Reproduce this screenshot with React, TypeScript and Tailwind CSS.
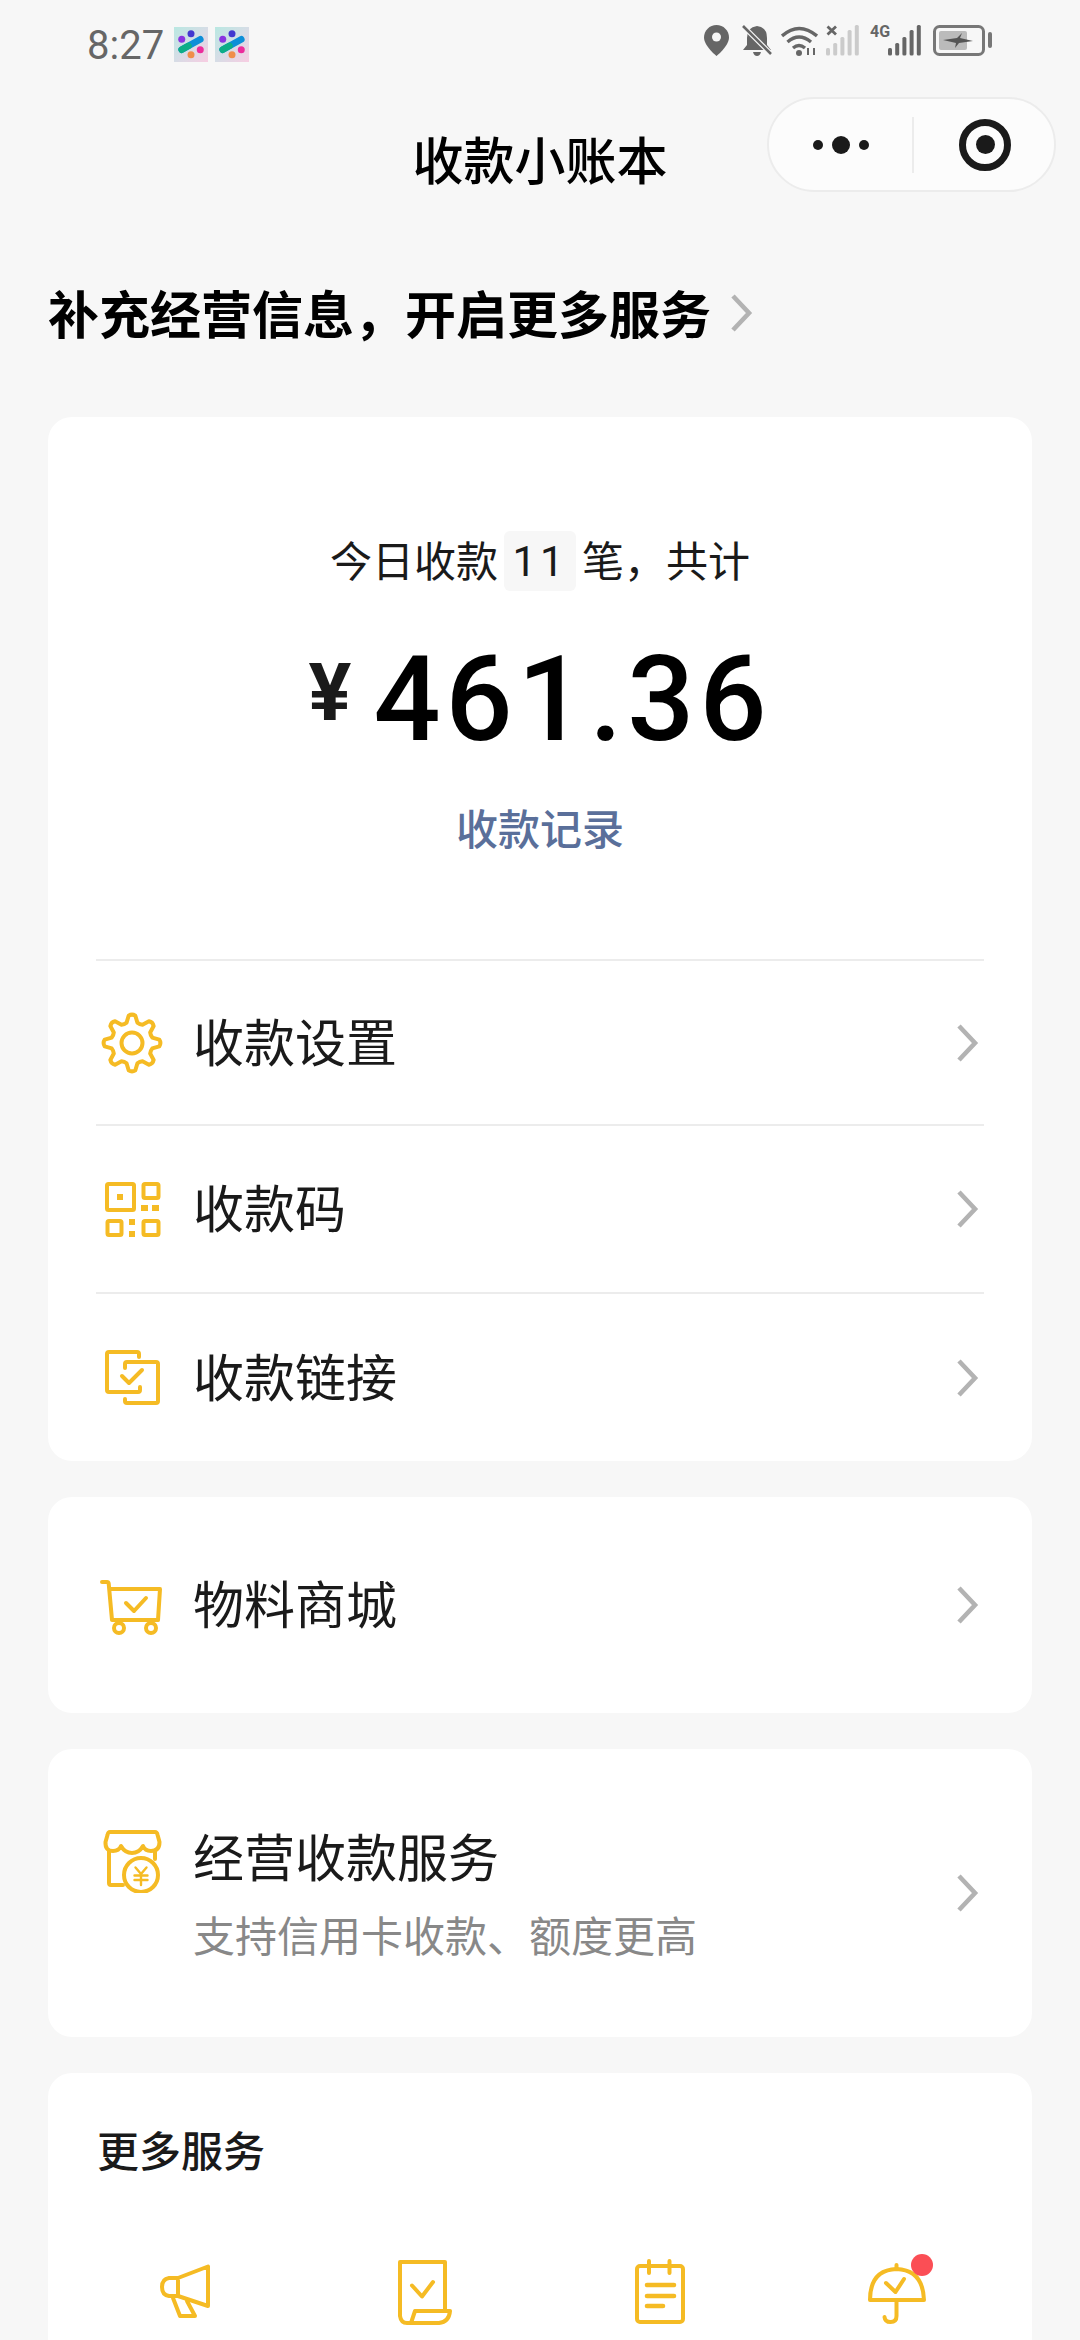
import React from "react";

const YELLOW = "#f5bb24";

// 8 tooth gear outline, centred on 32,32
const gearPath = () => {
  const pt = (r: number, deg: number) => {
    const a = (deg * Math.PI) / 180;
    return `${(32 + r * Math.cos(a)).toFixed(2)} ${(32 + r * Math.sin(a)).toFixed(2)}`;
  };
  let d = "";
  for (let i = 0; i < 8; i++) {
    const a = i * 45 - 90;
    d += `${i === 0 ? "M" : "L"}${pt(21, a - 15)} L${pt(27.5, a - 7)} Q${pt(29.5, a)} ${pt(27.5, a + 7)} L${pt(21, a + 15)} Q${pt(20, a + 22.5)} ${pt(21, a + 30)} `;
  }
  return d + "Z";
};

const Icon = ({ children, h = 64 }: { children: React.ReactNode; h?: number }) => (
  <svg
    width="64"
    height={h}
    viewBox={`0 0 64 ${h}`}
    fill="none"
    stroke={YELLOW}
    strokeWidth="4"
    strokeLinecap="round"
    strokeLinejoin="round"
  >
    {children}
  </svg>
);

const GearIcon = () => (
  <Icon>
    <path d={gearPath()} />
    <circle cx="32" cy="32" r="10.5" />
  </Icon>
);

const QrIcon = () => (
  <Icon>
    <rect x="7" y="7" width="27" height="26" rx="1.5" />
    <rect x="43.5" y="7" width="15" height="14" rx="1.5" />
    <rect x="7.5" y="44" width="14" height="14" rx="1.5" />
    <rect x="43.5" y="44" width="15" height="14" rx="1.5" />
    <g fill={YELLOW} stroke="none">
      <rect x="17" y="17" width="6" height="6" />
      <rect x="41" y="28" width="7" height="6" />
      <rect x="52" y="28" width="7" height="6" />
      <rect x="29" y="42" width="6" height="6" />
      <rect x="29" y="54" width="6" height="6" />
    </g>
  </Icon>
);

const LinkIcon = () => (
  <Icon>
    <path d="M39 11V8Q39 6 37 6H9Q7 6 7 8V44Q7 46 9 46H38Q40 46 40 44V41" />
    <path d="M25 22V18Q25 16 27 16H56Q58 16 58 18V55Q58 57 56 57H27Q25 57 25 55V53" />
    <path d="M22 30L29 37L42 24" />
  </Icon>
);

const CartIcon = () => (
  <Icon>
    <path d="M2 9H7Q8.4 9 8.7 10.5L12 47H58L60 16H9.5" />
    <circle cx="19" cy="55" r="5" />
    <circle cx="51" cy="55" r="5" />
    <path d="M26 30L34 38L46 25" />
  </Icon>
);

const StoreIcon = () => (
  <Icon>
    <path d="M10 3H55Q57 3 57.6 6L59.5 13Q59.5 22 51 22Q45 22 43 17Q39 24 32 24Q25 24 21 17Q19 22 13 22Q5 22 5.5 13L7.5 6Q8 3 10 3Z" />
    <path d="M9 22V54Q9 56 11 56H23" />
    <path d="M55 22V30" />
    <circle cx="41" cy="46" r="17" />
    <path d="M35.5 38.5L41 45L46.5 38.5M34.5 46.5H47.5M34.5 51H47.5M41 45V56" strokeWidth="2.4" />
  </Icon>
);

const HornIcon = () => (
  <Icon>
    <path d="M24 19L54 7.5V47L24 37V19H15Q8 20 8 28Q8 36 15 37H24" />
    <path d="M19 39L26 57H41L33 42" />
  </Icon>
);

const ReceiptIcon = () => (
  <Icon h={66}>
    <path d="M7 3H52V52M7 3V57Q8 64 14 64H46Q56 63 57 52H22L18 64" />
    <path d="M19 26.5L29 37.5L40 23" />
  </Icon>
);

const NotepadIcon = () => (
  <Icon h={66}>
    <rect x="9" y="7" width="46" height="56" rx="3" />
    <path d="M21 2V14M41.5 2V14" />
    <path d="M19 26H46M19 37H46M19 47H35" strokeWidth="4.6" />
  </Icon>
);

const UmbrellaIcon = () => (
  <Icon h={66}>
    <path d="M31.5 6V10" />
    <path d="M5 41Q5 11 31.5 10Q58 11 59 41Z" />
    <path d="M31.5 41V57Q31.5 63 25.5 63Q20 63 19.5 58" />
    <path d="M21 24L30.5 33L39 20" />
  </Icon>
);

const Chevron = ({ color = "#b3b3b3" }: { color?: string }) => (
  <svg width="24" height="40" viewBox="0 0 24 40" fill="none" stroke={color} strokeWidth="4.6" strokeLinejoin="miter">
    <path d="M4 3L20 20L4 37" />
  </svg>
);

const AppLogo = () => (
  <svg width="34" height="35" viewBox="0 0 33 34">
    <defs>
      <linearGradient id="logoBg" x1="0" y1="0" x2="1" y2="1">
        <stop offset="0" stopColor="#b9e8e2" />
        <stop offset="0.5" stopColor="#d6dde6" />
        <stop offset="1" stopColor="#f8cde2" />
      </linearGradient>
    </defs>
    <rect width="33" height="34" fill="url(#logoBg)" />
    <circle cx="16.5" cy="6.5" r="3.4" fill="#4338d0" />
    <circle cx="7.5" cy="12" r="3.4" fill="#8a35e0" />
    <circle cx="25.5" cy="22" r="3.4" fill="#ec2c9c" />
    <circle cx="16.5" cy="27" r="3.4" fill="#f08d4a" />
    <path d="M7.5 22L25.5 12" stroke="#0d8fd8" strokeWidth="6.5" strokeLinecap="round" />
    <path d="M7.5 22L14 18.4" stroke="#0dae86" strokeWidth="6.5" strokeLinecap="round" />
  </svg>
);

const Bars = ({ color }: { color: string }) => (
  <svg width="33" height="31" viewBox="0 0 33 31" fill={color}>
    <rect x="0" y="23" width="4" height="7.5" rx="1.5" />
    <rect x="7.2" y="18" width="4" height="12.5" rx="1.5" />
    <rect x="14.4" y="12" width="4" height="18.5" rx="1.5" />
    <rect x="21.6" y="5" width="4" height="25.5" rx="1.5" />
    <rect x="28.8" y="0" width="4" height="30.5" rx="1.5" />
  </svg>
);

const StatusIcons = () => (
  <div className="flex items-start">
    <svg width="25" height="31" viewBox="0 0 25 31">
      <path d="M12.5 0C5.6 0 0 5.5 0 12.5C0 21 12.5 31 12.5 31S25 21 25 12.5C25 5.5 19.4 0 12.5 0Z" fill="#666" />
      <circle cx="12.5" cy="12" r="4.5" fill="#f7f7f7" />
    </svg>
    <svg className="ml-[13px]" width="30" height="31" viewBox="0 0 30 31">
      <path d="M15 1Q25 2 25 13V20L29 25H1L5 20V13Q5 2 15 1Z" fill="#666" />
      <path d="M11 27H19Q18 31 15 31Q12 31 11 27Z" fill="#666" />
      <path d="M1 1L29 29" stroke="#f7f7f7" strokeWidth="5" />
      <path d="M1 1L29 29" stroke="#666" strokeWidth="2.6" />
    </svg>
    <svg className="ml-[9px]" width="37" height="31" viewBox="0 0 37 31" fill="none" stroke="#666" strokeWidth="3.4">
      <path d="M1 11Q18 -4 36 11" />
      <path d="M6.5 17Q18 7 30 17" />
      <path d="M12 23Q18 18 24 23" />
      <circle cx="18" cy="28" r="3" fill="#666" stroke="none" />
      <path d="M27 30V23M33 23V30" strokeWidth="2" />
    </svg>
    <div className="relative ml-[8px] w-[34px]">
      <Bars color="#cbcbcb" />
      <svg className="absolute left-0 top-0" width="12" height="12" viewBox="0 0 12 12">
        <path d="M1.5 1.5L10 9.5M10 1.5L1.5 9.5" stroke="#666" strokeWidth="2.8" />
      </svg>
    </div>
    <span className="ml-[10px] w-[18px] font-['Roboto'] text-[16px] font-bold leading-[14px] text-[#666]">4G</span>
    <Bars color="#666" />
    <svg className="ml-[12px]" width="59" height="32" viewBox="0 0 59 32">
      <rect x="1.5" y="1.5" width="49" height="28" rx="5" fill="none" stroke="#777" strokeWidth="3" />
      <rect x="6" y="6" width="28" height="19" rx="2" fill="#bbb" />
      <path d="M10 15L24 13L29 8L27 13L40 16L26 18L22 23L23 18Z" fill="#555" />
      <rect x="55" y="7" width="4" height="16" rx="2" fill="#777" />
    </svg>
  </div>
);

const Row = ({
  icon,
  label,
  className,
}: {
  icon: React.ReactNode;
  label: string;
  className: string;
}) => (
  <div className={`flex items-center border-t-[2px] border-[#ececec] ${className}`}>
    <div className="flex w-[72px] justify-center">{icon}</div>
    <span className="ml-[25px] flex-1 pb-[5px] text-[51px] text-[#1a1a1a]">{label}</span>
    <div className="mr-[5px]">
      <Chevron />
    </div>
  </div>
);

export default function App() {
  return (
    <div
      className="h-[2340px] w-[1080px] overflow-hidden bg-[#f7f7f7]"
      style={{ fontFamily: '"Noto Sans CJK SC", "Noto Sans", sans-serif' }}
    >
      {/* status bar */}
      <div className="flex h-[97px] items-start justify-between pl-[87px] pr-[88px] pt-[25px]">
        <div className="flex items-center">
          <span className="pt-[4px] font-['Roboto'] text-[40px] leading-[34px] text-[#666]">8:27</span>
          <div className="ml-[10px] flex gap-[7px]">
            <AppLogo />
            <AppLogo />
          </div>
        </div>
        <StatusIcons />
      </div>

      {/* nav */}
      <div className="grid h-[95px] grid-cols-[1fr_auto_1fr] items-center px-[24px]">
        <div />
        <h1 className="pt-[26px] text-[51px] font-medium leading-[60px] text-black">收款小账本</h1>
        <div className="flex justify-end">
          <div className="flex h-[95px] w-[289px] items-center rounded-full border-[2px] border-[#ececec] bg-[#fcfcfc]">
            <div className="flex w-[143px] items-center justify-center gap-[9px]">
              <span className="h-[10px] w-[10px] rounded-full bg-[#1a1a1a]" />
              <span className="h-[18px] w-[18px] rounded-full bg-[#1a1a1a]" />
              <span className="h-[10px] w-[10px] rounded-full bg-[#1a1a1a]" />
            </div>
            <div className="h-[56px] w-[2px] bg-[#ececec]" />
            <div className="flex flex-1 items-center justify-center pl-[2px]">
              <div className="flex h-[52px] w-[52px] items-center justify-center rounded-full border-[7px] border-[#1a1a1a]">
                <span className="h-[19px] w-[19px] rounded-full bg-[#1a1a1a]" />
              </div>
            </div>
          </div>
        </div>
      </div>

      <div className="px-[48px]">
        {/* heading */}
        <div className="flex h-[225px] items-center pt-[16px]">
          <span className="text-[51px] font-bold text-black">补充经营信息，开启更多服务</span>
          <div className="ml-[18px]">
            <Chevron />
          </div>
        </div>

        <div className="flex flex-col gap-[36px]">
          {/* today's takings */}
          <div className="h-[1044px] rounded-[24px] bg-white">
            <div className="flex h-[542px] flex-col items-center pt-[114px]">
              <div className="flex h-[60px] items-center text-[42px] text-[#1a1a1a]">
                <span className="pb-[5px]">今日收款</span>
                <span className="mx-[6px] flex h-[60px] w-[72px] items-center justify-center rounded-[6px] bg-[#f7f7f7] font-['Roboto'] tracking-[4px]">
                  11
                </span>
                <span className="pb-[5px]">笔，共计</span>
              </div>
              <div className="mt-[49px] flex h-[120px] items-center font-['Roboto'] text-black">
                <span className="mr-[22px] pb-[14px] text-[80px] font-bold text-[#1a1a1a]">¥</span>
                <span className="text-[118px] font-medium leading-[120px] tracking-[5px]">461.36</span>
              </div>
              <div className="mt-[37px] text-[42px] font-medium leading-[60px] text-[#5a6f9a]">收款记录</div>
            </div>
            <div className="mx-[48px]">
              <Row icon={<GearIcon />} label="收款设置" className="h-[165px]" />
              <Row icon={<QrIcon />} label="收款码" className="h-[168px]" />
              <Row icon={<LinkIcon />} label="收款链接" className="h-[169px]" />
            </div>
          </div>

          {/* materials shop */}
          <div className="flex h-[216px] items-center rounded-[24px] bg-white pl-[48px] pr-[53px]">
            <div className="flex w-[72px] justify-center">
              <CartIcon />
            </div>
            <span className="ml-[25px] flex-1 pb-[6px] text-[51px] text-[#1a1a1a]">物料商城</span>
            <Chevron />
          </div>

          {/* business service */}
          <div className="flex h-[288px] items-center rounded-[24px] bg-white pl-[48px] pr-[53px]">
            <div className="flex w-[72px] justify-center self-start pt-[80px]">
              <StoreIcon />
            </div>
            <div className="ml-[25px] flex-1 self-start pt-[76px]">
              <div className="text-[51px] leading-[60px] text-[#1a1a1a]">经营收款服务</div>
              <div className="mt-[19px] text-[42px] leading-[60px] text-[#888]">支持信用卡收款、额度更高</div>
            </div>
            <Chevron />
          </div>

          {/* more services */}
          <div className="rounded-[24px] bg-white pb-[40px] pl-[19px] pr-[17px] pt-[46px]">
            <div className="pl-[30px] text-[42px] font-medium leading-[60px] text-[#1a1a1a]">更多服务</div>
            <div className="mt-[80px] grid grid-cols-4">
              <div className="flex justify-center">
                <HornIcon />
              </div>
              <div className="flex justify-center pl-[4px]">
                <ReceiptIcon />
              </div>
              <div className="flex justify-center">
                <NotepadIcon />
              </div>
              <div className="flex justify-center">
                <div className="relative">
                  <UmbrellaIcon />
                  <span className="absolute left-[46px] top-[-5px] h-[22px] w-[22px] rounded-full bg-[#fb4e55]" />
                </div>
              </div>
            </div>
          </div>
        </div>
      </div>
    </div>
  );
}
